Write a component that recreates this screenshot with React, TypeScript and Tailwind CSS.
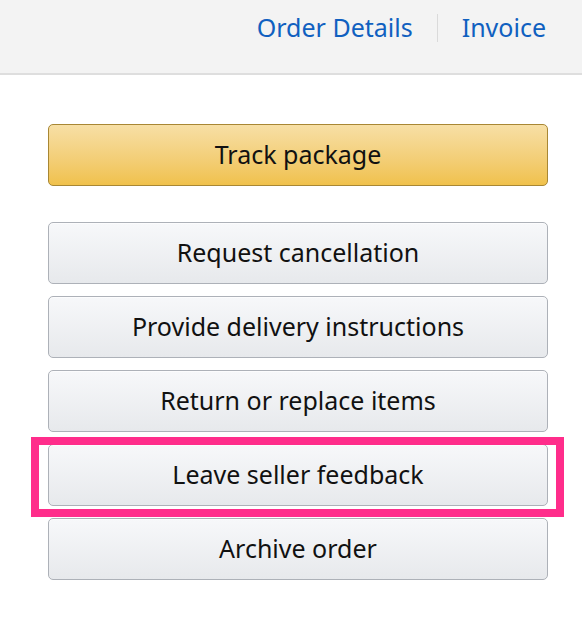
const actions = [
  'Request cancellation',
  'Provide delivery instructions',
  'Return or replace items',
  'Leave seller feedback',
  'Archive order',
];

const grayBtn =
  'w-full h-[62px] rounded-[5px] border border-[#adb1b8] bg-gradient-to-b from-[#f7f8fa] to-[#e7e9ec] text-[25px] text-[#111] shadow-[inset_0_1px_0_rgba(255,255,255,0.6)]';

export default function App() {
  return (
    <div className="w-[582px] h-[632px] bg-white overflow-hidden font-['Noto_Sans',sans-serif]">
      <header className="h-[75px] bg-[#f3f3f3] border-b-2 border-[#dedede] flex items-start justify-end pr-[36px] pt-[10px]">
        <a className="text-[25px] text-[#1060c0] leading-[34px]">Order Details</a>
        <span className="w-px h-[28px] bg-[#dadada] mx-[24px] mt-[4px]" />
        <a className="text-[25px] text-[#1060c0] leading-[34px]">Invoice</a>
      </header>

      <main className="px-[48px] pt-[49px] w-[596px]">
        <button className="w-[500px] h-[62px] rounded-[5px] border border-[#a88734] bg-gradient-to-b from-[#f7dfa5] to-[#f0c14b] text-[25px] text-[#111]">
          Track package
        </button>

        <div className="mt-[36px] w-[500px] flex flex-col gap-[12px]">
          {actions.map((label) =>
            label === 'Leave seller feedback' ? (
              <div key={label} className="relative">
                <button className={grayBtn}>{label}</button>
                <div className="absolute left-[-17px] right-[-16px] top-[-7px] bottom-[-11px] border-[8px] border-[#ff2d8b] pointer-events-none" />
              </div>
            ) : (
              <button key={label} className={grayBtn}>
                {label}
              </button>
            )
          )}
        </div>
      </main>
    </div>
  );
}
